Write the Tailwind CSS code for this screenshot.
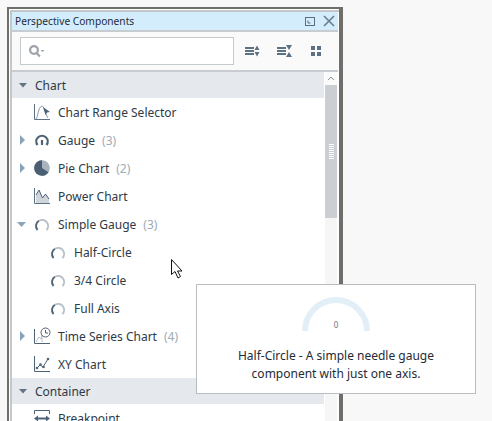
<!DOCTYPE html>
<html><head><meta charset="utf-8"><script src="https://cdn.jsdelivr.net/npm/@tailwindcss/browser@4"></script></head>
<body class="m-0 bg-[#f8f8f8]">
<div class="relative w-[492px] h-[421px] overflow-hidden bg-[#f8f8f8] font-['Noto_Sans',sans-serif] text-[12px] text-[#2e3a46]">
  <!-- panel -->
  <div class="absolute left-[7px] top-[7px] w-[336px] h-[414px] border-t-2 border-l-2 border-r-4 border-[#6e6e6a] bg-white pl-px pt-px">
    <div class="border-l-2 border-t-2 border-[#c4c7ca] h-full flex flex-col pr-px">
      <div class="h-[18px] shrink-0 bg-[#d3edfd] flex items-center pl-[3px] pr-[3px]">
        <span class="text-[#1f2b36] text-[10.2px] pt-[2px]">Perspective Components</span>
        <div class="ml-auto flex items-center gap-[8px]">
          <svg width="10" height="9" viewBox="0 0 10 9" fill="none" stroke="#5d6f7e"><rect x="0.500" y="0.500" width="9" height="8"/><path d="M3 3.500v2.500h2.500"/></svg>
          <svg width="12" height="12" viewBox="0 0 12 12" fill="none" stroke="#6b7d8b" stroke-width="1.600"><path d="M1 1l10 10M11 1L1 11"/></svg>
        </div>
      </div>
      <div class="h-[42px] shrink-0 border-y-2 border-[#c8ccd0] bg-[#fafafa] flex items-center pl-[8px]">
        <div class="w-[214px] h-[28px] bg-white border border-[#c5c9cc] flex items-center pl-[7px]">
          <svg width="18" height="14" viewBox="0 0 18 14" fill="none"><circle cx="6" cy="6" r="3.900" stroke="#9da3a8" stroke-width="2.200"/><path d="M8.500 9l3.500 3.500" stroke="#9da3a8" stroke-width="2.200"/><path d="M12.500 6h4l-2 2z" fill="#9da3a8"/></svg>
        </div>
        <div class="ml-[11px] flex items-center">
          <svg width="15" height="14" viewBox="0 0 15 14" fill="#5d7184"><rect x="0" y="3" width="9" height="2"/><rect x="0" y="6" width="9" height="2"/><rect x="0" y="9" width="9" height="2"/><path d="M9.500 6h5l-2.500-4.500zM9.500 8h5l-2.500 4.500z"/></svg>
          <svg class="ml-[17px]" width="15" height="14" viewBox="0 0 15 14" fill="#5d7184"><rect x="0" y="3" width="9" height="2"/><rect x="0" y="6" width="9" height="2"/><rect x="0" y="9" width="9" height="2"/><path d="M9 1h6l-3 5zM9 13h6l-3-5z"/></svg>
          <svg class="ml-[19px]" width="10" height="10" viewBox="0 0 10 10" fill="#5d7184"><rect x="0" y="0" width="4" height="4"/><rect x="6" y="0" width="4" height="4"/><rect x="0" y="6" width="4" height="4"/><rect x="6" y="6" width="4" height="4"/></svg>
        </div>
      </div>
      <div class="flex flex-1 min-h-0">
        <div class="w-[313px] bg-white overflow-hidden pr-px">
          <div class="h-[26px] bg-[#e5e8ec] flex items-center pl-[7px]"><svg width="8" height="5" viewBox="0 0 8 5" fill="#66727e"><path d="M0 0h8l-4 4.500z"/></svg><span class="ml-[8px] pt-[2px]">Chart</span></div>
          <div class="h-[28px] flex items-center pl-[22px]"><svg width="18" height="18" viewBox="0 0 18 18" fill="none" stroke="#5d7184"><path d="M0.500 1v15.500h15.500"/><path d="M2 16c2-2 2-12 6-13 2 0 3 7 6 12" stroke="#8b99a5"/><path d="M9 4l7 5-3 .5-1.500 2.500z" fill="#4f6376" stroke="none"/></svg><span class="ml-[6px] pt-[2px]">Chart Range Selector</span></div>
          <div class="h-[28px] flex items-center pl-[8px]"><svg width="6" height="10" viewBox="0 0 6 10" fill="#8ba3b8"><path d="M0 0l5 5-5 5z"/></svg><svg class="ml-[8px]" width="18" height="18" viewBox="0 0 18 18" fill="none" stroke="#4f6376" stroke-width="2.200"><path d="M3.500 14a5.700 5.700 0 1 1 9 0"/><path d="M8 9v5"/></svg><span class="ml-[6px] pt-[2px]">Gauge</span><span class="ml-[7px] pt-[2px] text-[#a0abb5]">(3)</span></div>
          <div class="h-[28px] flex items-center pl-[8px]"><svg width="6" height="10" viewBox="0 0 6 10" fill="#8ba3b8"><path d="M0 0l5 5-5 5z"/></svg><svg class="ml-[8px]" width="18" height="18" viewBox="0 0 18 18"><circle cx="8" cy="9" r="7.800" fill="#a9b4bd"/><path d="M8 9V1.200a7.800 7.800 0 1 0 6.500 12.100z" fill="#4a5f73"/></svg><span class="ml-[6px] pt-[2px]">Pie Chart</span><span class="ml-[7px] pt-[2px] text-[#a0abb5]">(2)</span></div>
          <div class="h-[28px] flex items-center pl-[22px]"><svg width="18" height="18" viewBox="0 0 18 18" fill="none" stroke="#5d7184"><path d="M0.500 1v15.500h15.500"/><path d="M2 16V8l3-5 3.500 8 3-4 3.500 5v4z" fill="#cfd5da" stroke="none"/><path d="M2 8l3-5 3.500 8 3-4 3.500 5" stroke="#4f6376"/></svg><span class="ml-[6px] pt-[2px]">Power Chart</span></div>
          <div class="h-[28px] flex items-center pl-[5px]"><svg width="9" height="5" viewBox="0 0 9 5" fill="#8ba3b8"><path d="M0 0h9l-4.500 5z"/></svg><svg class="ml-[8px]" width="18" height="18" viewBox="0 0 18 18" fill="none" stroke-width="1.900"><path d="M3.500 15a6 6 0 0 1 1.500-9.200" stroke="#4f6376"/><path d="M5 5.800a6 6 0 0 1 7.500 9.200" stroke="#b7c0c8"/></svg><span class="ml-[6px] pt-[2px]">Simple Gauge</span><span class="ml-[7px] pt-[2px] text-[#a0abb5]">(3)</span></div>
          <div class="h-[28px] flex items-center pl-[38px]"><svg width="18" height="18" viewBox="0 0 18 18" fill="none" stroke-width="1.900"><path d="M3.500 15a6 6 0 0 1 1.500-9.200" stroke="#4f6376"/><path d="M5 5.800a6 6 0 0 1 7.500 9.200" stroke="#b7c0c8"/></svg><span class="ml-[6px] pt-[2px]">Half-Circle</span></div>
          <div class="h-[28px] flex items-center pl-[38px]"><svg width="18" height="18" viewBox="0 0 18 18" fill="none" stroke-width="1.900"><path d="M3.500 15a6 6 0 0 1 1.500-9.200" stroke="#4f6376"/><path d="M5 5.800a6 6 0 0 1 7.500 9.200" stroke="#b7c0c8"/></svg><span class="ml-[6px] pt-[2px]">3/4 Circle</span></div>
          <div class="h-[28px] flex items-center pl-[38px]"><svg width="18" height="18" viewBox="0 0 18 18" fill="none" stroke-width="1.900"><path d="M3.500 15a6 6 0 0 1 1.500-9.200" stroke="#4f6376"/><path d="M5 5.800a6 6 0 0 1 7.500 9.200" stroke="#b7c0c8"/></svg><span class="ml-[6px] pt-[2px]">Full Axis</span></div>
          <div class="h-[28px] flex items-center pl-[8px]"><svg width="6" height="10" viewBox="0 0 6 10" fill="#8ba3b8"><path d="M0 0l5 5-5 5z"/></svg><svg class="ml-[8px]" width="18" height="18" viewBox="0 0 18 18" fill="none" stroke="#4f6376"><path d="M0.500 2v14.500h15.500"/><path d="M2 15l3-5 2 2 1-4v7" stroke="#b7c0c8"/><circle cx="11.500" cy="5.500" r="4.500"/><path d="M11.500 3v3h2.500"/></svg><span class="ml-[6px] pt-[2px]">Time Series Chart</span><span class="ml-[7px] pt-[2px] text-[#a0abb5]">(4)</span></div>
          <div class="h-[28px] flex items-center pl-[22px]"><svg width="18" height="18" viewBox="0 0 18 18" fill="none" stroke="#4f6376"><path d="M0.500 1v15.500h15.500"/><path d="M3 13l3-3 3 2 5-8"/><g fill="#4f6376" stroke="none"><circle cx="3" cy="13" r="1.300"/><circle cx="6.500" cy="9.500" r="1.300"/><circle cx="9.500" cy="12" r="1.300"/><circle cx="14" cy="4" r="1.300"/></g></svg><span class="ml-[6px] pt-[2px]">XY Chart</span></div>
          <div class="h-[26px] bg-[#e5e8ec] flex items-center pl-[7px]"><svg width="8" height="5" viewBox="0 0 8 5" fill="#66727e"><path d="M0 0h8l-4 4.500z"/></svg><span class="ml-[8px] pt-[2px]">Container</span></div>
          <div class="h-[28px] flex items-center pl-[22px]"><svg width="18" height="18" viewBox="0 0 18 18" fill="#4f6376" stroke="#4f6376"><path d="M0.500 5V1.500h15V5M0.500 14v2.500h15V14" fill="none"/><path d="M3 9.500h10" stroke-width="2"/><path d="M0 9.500l4-3v6zM16 9.500l-4-3v6z" stroke="none"/></svg><span class="ml-[6px] pt-[2px]">Breakpoint</span></div>
        </div>
        <div class="w-[12px] bg-[#f6f6f6] flex flex-col shrink-0">
          <div class="h-[13px] bg-[#fafafa] flex items-center justify-center"><svg width="8" height="5" viewBox="0 0 8 5" fill="none" stroke="#8b959e"><path d="M1 4l3-3 3 3"/></svg></div>
          <div class="h-[133px] bg-[#cbcfd3] flex flex-col items-center justify-center gap-px">
            <div class="w-[5px] h-px bg-white"></div><div class="w-[5px] h-px bg-white"></div><div class="w-[5px] h-px bg-white"></div><div class="w-[5px] h-px bg-white"></div><div class="w-[5px] h-px bg-white"></div><div class="w-[5px] h-px bg-white"></div><div class="w-[5px] h-px bg-white"></div><div class="w-[5px] h-px bg-white"></div>
          </div>
        </div>
      </div>
    </div>
  </div>
  <!-- tooltip -->
  <div class="absolute left-[196px] top-[284px] w-[280px] h-[110px] bg-white border border-[#b9bdc1] flex flex-col items-center">
    <svg class="mt-[12px]" width="68" height="36" viewBox="0 0 68 36" fill="none"><path d="M3 34a31 31 0 0 1 62 0" stroke="#e3eff7" stroke-width="6"/></svg>
    <span class="absolute top-[34px] text-[8px] text-[#6b7680]">0</span>
    <div class="mt-[14px] text-center text-[12px] leading-[18px] text-[#1f2b36]">Half-Circle - A simple needle gauge<br>component with just one axis.</div>
  </div>
  <!-- cursor -->
  <svg class="absolute left-[170px] top-[258px]" width="14" height="23" viewBox="0 0 14 23" fill="#fff" stroke="#111"><path d="M1.500 1.500v15l3.500-3 3 6.500 2.500-1.500-3-5.500h4.500z"/></svg>
</div>
</body></html>
